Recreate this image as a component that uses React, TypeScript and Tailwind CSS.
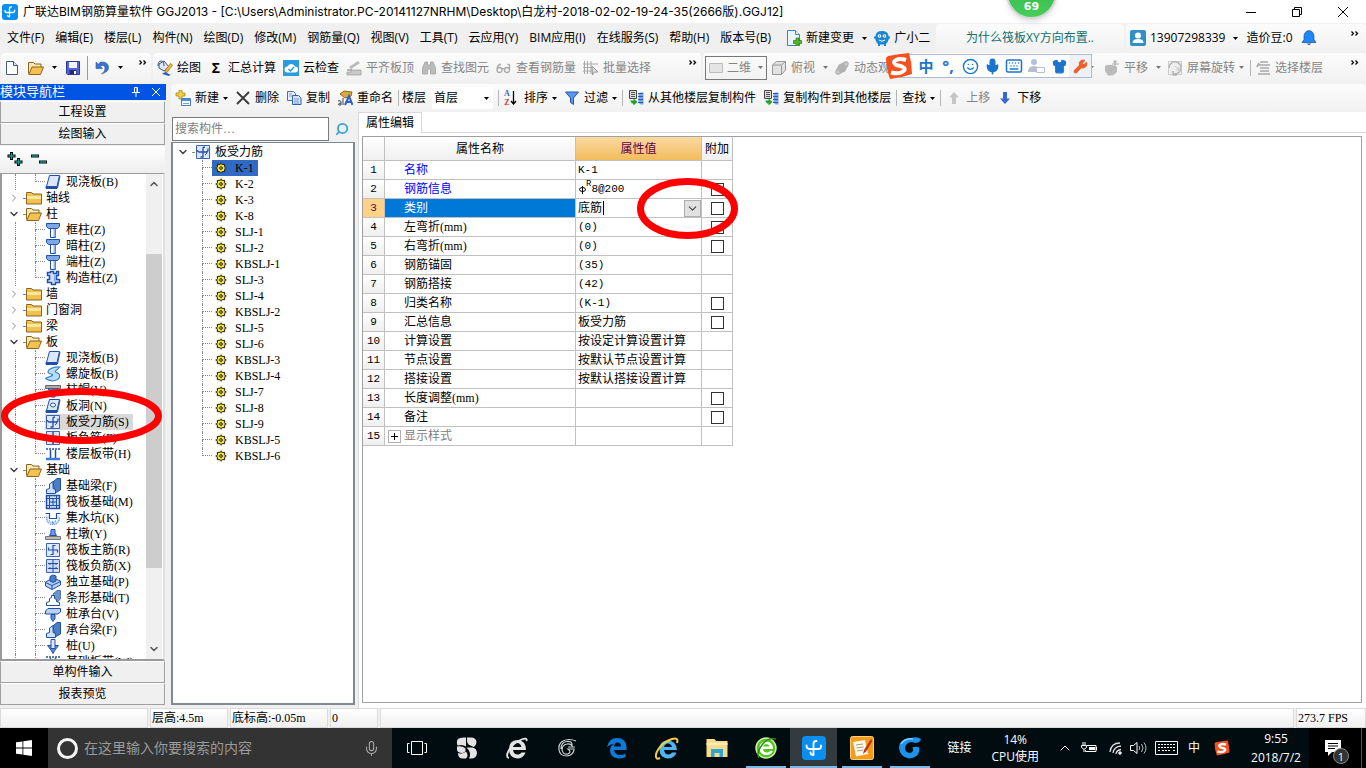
import type { ReactNode } from 'react';
import { ChevronDown, ChevronUp, ChevronRight, Mic, Search, Smile, Keyboard, Shirt, Wrench } from 'lucide-react';

const UI_FONT = "font-['Open_Sans','Noto_Sans_CJK_SC',sans-serif]";
const SONG_FONT = "font-['Liberation_Serif','Noto_Sans_CJK_SC',serif]";

const menus = [
  '文件(F)', '编辑(E)', '楼层(L)', '构件(N)', '绘图(D)', '修改(M)', '钢筋量(Q)', '视图(V)',
  '工具(T)', '云应用(Y)', 'BIM应用(I)', '在线服务(S)', '帮助(H)', '版本号(B)',
];

type NavRow = { label: string; icon: string; root?: boolean; open?: boolean; last?: boolean; active?: boolean };

const navRows: NavRow[] = [
  { label: '现浇板(B)', icon: 'slab', last: true },
  { label: '轴线', icon: 'folder', root: true },
  { label: '柱', icon: 'folderOpen', root: true, open: true },
  { label: '框柱(Z)', icon: 'column' },
  { label: '暗柱(Z)', icon: 'column' },
  { label: '端柱(Z)', icon: 'column' },
  { label: '构造柱(Z)', icon: 'tieColumn', last: true },
  { label: '墙', icon: 'folder', root: true },
  { label: '门窗洞', icon: 'folder', root: true },
  { label: '梁', icon: 'folder', root: true },
  { label: '板', icon: 'folderOpen', root: true, open: true },
  { label: '现浇板(B)', icon: 'slab' },
  { label: '螺旋板(B)', icon: 'spiral' },
  { label: '柱帽(V)', icon: 'cap' },
  { label: '板洞(N)', icon: 'hole' },
  { label: '板受力筋(S)', icon: 'rebar', active: true },
  { label: '板负筋(F)', icon: 'negRebar' },
  { label: '楼层板带(H)', icon: 'band', last: true },
  { label: '基础', icon: 'folderOpen', root: true, open: true },
  { label: '基础梁(F)', icon: 'footBeam' },
  { label: '筏板基础(M)', icon: 'raft' },
  { label: '集水坑(K)', icon: 'pit' },
  { label: '柱墩(Y)', icon: 'pier' },
  { label: '筏板主筋(R)', icon: 'mainBar' },
  { label: '筏板负筋(X)', icon: 'raftNeg' },
  { label: '独立基础(P)', icon: 'isolated' },
  { label: '条形基础(T)', icon: 'strip' },
  { label: '桩承台(V)', icon: 'pileCap' },
  { label: '承台梁(F)', icon: 'footBeam' },
  { label: '桩(U)', icon: 'pile' },
  { label: '基础板带(W)', icon: 'band' },
];

const members = [
  'K-1', 'K-2', 'K-3', 'K-8', 'SLJ-1', 'SLJ-2', 'KBSLJ-1', 'SLJ-3', 'SLJ-4', 'KBSLJ-2',
  'SLJ-5', 'SLJ-6', 'KBSLJ-3', 'KBSLJ-4', 'SLJ-7', 'SLJ-8', 'SLJ-9', 'KBSLJ-5', 'KBSLJ-6',
];

const props = [
  { name: '名称', value: 'K-1', required: true },
  { name: '钢筋信息', value: '8@200', required: true, check: true },
  { name: '类别', value: '底筋', check: true, editing: true },
  { name: '左弯折(mm)', value: '(0)', check: true },
  { name: '右弯折(mm)', value: '(0)', check: true },
  { name: '钢筋锚固', value: '(35)' },
  { name: '钢筋搭接', value: '(42)' },
  { name: '归类名称', value: '(K-1)', check: true },
  { name: '汇总信息', value: '板受力筋', check: true },
  { name: '计算设置', value: '按设定计算设置计算' },
  { name: '节点设置', value: '按默认节点设置计算' },
  { name: '搭接设置', value: '按默认搭接设置计算' },
  { name: '长度调整(mm)', value: '', check: true },
  { name: '备注', value: '', check: true },
  { name: '显示样式', value: '', group: true },
];

const BLUE = '#1f4fa8';

const glyphs: Record<string, ReactNode> = {
  folder: (
    <>
      <path d="M.5 3.500v-1h5l1.500 1.500h8.500v10h-15z" fill="#f2c14b" stroke="#8a6420" />
      <path d="M1 6h14v3H1z" fill="#fbe6a0" />
    </>
  ),
  folderOpen: (
    <>
      <path d="M.5 13.500v-11h5l1.500 1.500h6v3" fill="#fbe9b4" stroke="#8a6420" />
      <path d="M.8 14.500 4 7h11.500l-3 7.500z" fill="#f4c24e" stroke="#8a6420" />
    </>
  ),
  slab: (
    <>
      <path d="M4.500 1.500h10l-2.500 11H1.500z" fill="#dbe8fb" stroke={BLUE} />
      <path d="M1 12.500h11v2H1zM15 2l-2.500 12" fill={BLUE} stroke={BLUE} />
    </>
  ),
  hole: (
    <>
      <path d="M4.500 1.500h10l-2.500 11H1.500z" fill="#dbe8fb" stroke={BLUE} />
      <path d="M1 12.500h11v2H1zM15 2l-2.500 12" fill={BLUE} stroke={BLUE} />
      <ellipse cx="8" cy="7" rx="2.500" ry="2" fill="#fff" stroke={BLUE} />
    </>
  ),
  column: (
    <>
      <path d="M1.500 1.500h13v3l-2 2h-9l-2-2z" fill="#7ea6e6" stroke={BLUE} />
      <path d="M5.500 6.500h5v9h-5z" fill="#fff" stroke={BLUE} />
      <path d="M8.500 7h2v8h-2z" fill="#8db4ee" />
    </>
  ),
  tieColumn: (
    <>
      <path d="M5.500 1.500h3v2h3v-2h2v4h-2v4h3v3h-4v2h-4v-2h-4v-3h2v-4h-2v-3h3z" fill="#cfe0fa" stroke={BLUE} strokeWidth="1.500" />
      <path d="M9 5.500h1.500v6H9z" fill="#7ea6e6" />
    </>
  ),
  spiral: <path d="M15 1C7 .5 1.500 4 3.500 7c1 1.500 4.500.5 4 2-.5 2-4 1-7 3.500 5 4 15 2.500 14-3.500-.5-3-5-2-4-4 .5-1.500 3-2 4.500-4z" fill="#b9dcf7" stroke="#3485cf" strokeWidth="1.200" />,
  cap: (
    <>
      <path d="M.5 3.500h15v3H.5z" fill="#aaa" stroke="#666" />
      <path d="M3 7h10l-3 3v5H6v-5z" fill="#9dbcf0" stroke={BLUE} />
    </>
  ),
  rebar: (
    <>
      <path d="M1.500 1.500h13v13h-13z" fill="#dfe8fb" stroke="#3c63b8" />
      <path d="M8 13.500V4.500q0-1.500 2-1.500M5.500 13H8M2.500 6q0 2 1.500 2h7q2 0 2-2V4.500" fill="none" stroke={BLUE} strokeWidth="1.300" />
      <path d="M10 11q1.500-.5 2-3" fill="none" stroke={BLUE} />
    </>
  ),
  negRebar: (
    <>
      <path d="M1.500 1.500h13v13h-13z" fill="#dfe8fb" stroke="#3c63b8" />
      <path d="M8 2v12M2 8h12" fill="none" stroke={BLUE} strokeWidth="1.500" />
    </>
  ),
  band: (
    <>
      <path d="M1 3h14" stroke={BLUE} strokeWidth="1.500" strokeDasharray="2 1" />
      <path d="M5.500 4v8M10.500 4v8" stroke={BLUE} strokeWidth="1.500" />
      <path d="M1 13h14" stroke="#3c7be0" strokeWidth="2.500" />
    </>
  ),
  footBeam: (
    <>
      <path d="m8 4 4-3.500h3.500V12L10 15z" fill="#4a7fc4" stroke={BLUE} />
      <path d="M1.500 15.500v-4l3-1V6L8 3.500v7l2.500 1v4z" fill="#cfe0f8" stroke={BLUE} />
    </>
  ),
  raft: (
    <>
      <path d="M1.500 1.500h13v13h-13z" fill="#c9dcf8" stroke={BLUE} strokeWidth="1.500" />
      <path d="M4.500 1v14M11.500 1v14M1 4.500h14M1 11.500h14M8 4v8M5 8h6" stroke={BLUE} fill="none" />
    </>
  ),
  pit: (
    <>
      <path d="M.5 6q0 9 7.500 9t7.500-9h-3v5h-9V6z" fill="#cfe0fa" />
      <path d="M.5 3.500h4v5h7v-5h4" fill="none" stroke={BLUE} strokeWidth="1.200" />
      <path d="M1.500 7q.5 7.500 6.500 7.500T14.500 7" fill="none" stroke="#3c7be0" strokeDasharray="1 1" />
      <path d="M4 11h1m2 1h1m2-1h1m-4 2h2" stroke="#3c7be0" />
    </>
  ),
  pier: (
    <>
      <path d="M4.500 9.500 6 7V3.500h4V7l1.500 2.500z" fill="#6d9be6" stroke={BLUE} />
      <path d="M.5 10.500h15v3H.5z" fill="#bbb" stroke="#777" />
    </>
  ),
  mainBar: (
    <>
      <path d="M1.500 1.500h13v13h-13z" fill="#dfe8fb" stroke="#3c63b8" />
      <path d="M10.500 3.500H8v9H5.500M3.500 5.500V8h9v2.500" fill="none" stroke={BLUE} strokeWidth="1.200" />
    </>
  ),
  raftNeg: (
    <>
      <path d="M1.500 1.500h13v13h-13z" fill="#cfdcf8" stroke="#3c63b8" />
      <path d="M8 2v12M3 5.500h10M3 10.500h10M5 5v2m6-2v2m-6 2v2m6-2v2" fill="none" stroke={BLUE} />
    </>
  ),
  isolated: (
    <>
      <path d="M.5 8 8 4l7.500 3v4L7 15.500.5 12z" fill="#b9d1f6" stroke={BLUE} />
      <path d="M.5 8.500 7 11.500l8.500-4M7 11.500v4" fill="none" stroke={BLUE} />
      <path d="M5 2.500 8 1l3 1v5L8 8.500 5 7z" fill="#4a7fc4" stroke={BLUE} />
    </>
  ),
  strip: (
    <>
      <path d="m8 4 4-3.500h3.500V9L12 12z" fill="#6b97cf" stroke="#5577a0" />
      <path d="M1.500 15.500v-3l3-1v-3l2-1V5.500h3v3l2 1v2l3 1v3z" fill="#fff" stroke={BLUE} />
    </>
  ),
  pileCap: (
    <>
      <path d="M.5 5 3 2.500h12.500V6L13 8H.5z" fill="#b9d1f6" stroke={BLUE} />
      <path d="M6 8.500h4v4l-2 3-2-3z" fill="#5f8fdb" stroke={BLUE} />
    </>
  ),
  pile: (
    <>
      <path d="M2.500 7.500h11L10 12l-2 3.500L6 12z" fill="#5f8fdb" stroke={BLUE} />
      <path d="M6 1.500h4v9H6z" fill="#dce8fb" stroke={BLUE} />
    </>
  ),
  gear: (
    <>
      <path d="M8 1v14M1 8h14M3 3l10 10M13 3 3 13" stroke="#222" strokeWidth="3" />
      <circle cx="8" cy="8" r="5.500" fill="#222" />
      <path d="M8 2v12M2 8h12M4 4l8 8M12 4l-8 8" stroke="#ffef2e" strokeWidth="1.200" />
      <circle cx="8" cy="8" r="3.800" fill="none" stroke="#ffef2e" strokeWidth="1.400" />
      <circle cx="8" cy="8" r="2" fill="#222" />
      <circle cx="8" cy="8" r="1" fill="#ffef2e" />
    </>
  ),
  app: (
    <>
      <rect width="16" height="16" rx="3" fill="#0a8ff0" />
      <path d="M7.500 12.800V4.500q0-1.700 2-1.700M12.700 6.200v.6q0 1.700-1.700 1.700H4.800Q3 8.500 3 6.500M7.500 12.800q-2 0-2-1.500" fill="none" stroke="#fff" strokeWidth="1.300" strokeLinecap="round" />
    </>
  ),
  newFile: (
    <>
      <path d="M2.500 1.500h7l4 4v9h-11z" fill="#fff" stroke="#41597e" />
      <path d="M9.500 1.500v4h4" fill="#dce6f4" stroke="#41597e" />
    </>
  ),
  save: (
    <>
      <path d="M1.500 1.500h13v13h-12l-1-1z" fill="#5463d8" stroke="#2c3a9c" />
      <path d="M4 2h8v6H4z" fill="#f4f4fb" />
      <path d="M4.500 10h7v4h-7z" fill="#222d70" />
      <path d="M9 11h2v3H9z" fill="#fff" />
    </>
  ),
  undo: <path d="M2 2v6.500h6.500L6.200 6.200Q11 4 11 8.500q0 3-3.500 5.500 7-2 7-6.500 0-6-8-5.500L4.300 4.300z" fill="#3b74cf" stroke="#265aa8" strokeWidth=".6" />,
  draw: (
    <>
      <path d="m2 4 5-3 5 6-5 4-5-3z" fill="#dfe8f5" stroke="#3e5270" />
      <path d="M1 6q0-5 3-5t3 5" fill="none" stroke="#3e5270" />
      <path d="m15.500 5-5 7-2.500.500.500-2.500 5-6.500z" fill="#f1b43c" stroke="#986a15" strokeWidth=".7" />
      <path d="M5 14q3-3 6-.5t4-.5q-2 4-5 2.500T5 14z" fill="#2f5fc0" />
    </>
  ),
  cloud: (
    <>
      <path d="M0 0h16v16H0z" fill="#2b9be0" />
      <path d="M4.500 12.500a3 3 0 0 1 0-6 4 4 0 0 1 7.500 0 3 3 0 0 1 0 6z" fill="#fff" />
      <path d="m5.500 9 2 2 3.500-4" fill="none" stroke="#2b9be0" strokeWidth="1.500" />
    </>
  ),
  align: (
    <>
      <path d="m3 7 9-6 2 2-9 6zM1 9h5v2H1z" fill="#b9b9b9" />
      <path d="M1 15v-3h4v-2h10v5z" fill="#c8c8c8" stroke="#999" strokeWidth=".7" />
    </>
  ),
  find: (
    <path d="M4 2h2.500v3h3V2H12l2.500 6v6h-5V9h-3v5h-5V8z" fill="#bbb" stroke="#999" strokeWidth=".7" />
  ),
  glasses: (
    <path d="M1 10a2.500 2.500 0 1 0 5 0 2.500 2.500 0 1 0-5 0Q1 5 5 4M8.500 10a2.500 2.500 0 1 0 5 0 2.500 2.500 0 1 0-5 0M6 9q1-1 2.500.5M13.500 10V5l-2-1" fill="none" stroke="#a8a8a8" strokeWidth="1.300" />
  ),
  batch: (
    <>
      <path d="M1.500 1v13M4.500 1v13M8 1v13M0 4h15M0 7.500h9M0 11h9" stroke="#aaa" fill="none" />
      <path d="m9 6 6 6h-3.500l-2 3z" fill="#ddd" stroke="#999" />
    </>
  ),
  rect: <path d="M1.500 3.500h13v9h-13z" fill="#e4e4e4" stroke="#bbb" />,
  cube: (
    <>
      <path d="m1.500 5 4-3.500h9V10l-4 4.500h-9z" fill="#e2e2e2" stroke="#999" />
      <path d="M1.500 5h9v9.500M10.500 5l4-3.500" fill="none" stroke="#999" />
    </>
  ),
  orbit: (
    <>
      <ellipse cx="8" cy="8" rx="8" ry="3" transform="rotate(-45 8 8)" fill="#ccc" stroke="#aaa" />
      <circle cx="8" cy="8" r="4.500" fill="#b2b2b2" />
    </>
  ),
  pan: (
    <>
      <path d="M1 6q3-2 7-1l5 2v5l-4 3.500H4L1 11z" fill="#bbb" />
      <path d="M11 1v7M8 4h7M11 .5 9.500 2h3z" stroke="#aaa" fill="#aaa" />
    </>
  ),
  rotate: (
    <>
      <path d="M1.500 1.500h13v13h-13z" fill="#eee" stroke="#ccc" />
      <path d="M2 8a6 6 0 1 1 4 5.500M6 11v4h4" fill="none" stroke="#b5b5b5" strokeWidth="1.500" />
      <path d="m8 6 4 4M12 7v3H9" stroke="#c5c5c5" fill="none" />
    </>
  ),
  floors: <path d="M5 2h8M3 5h12M5 8h9M5 11h9M3 14h12M2 7l2-4" stroke="#a8a8a8" strokeWidth="1.700" fill="none" />,
  create: (
    <>
      <path d="M4 0h3v3h3v3H7v3H4V6H1V3h3z" fill="#f4d03c" stroke="#9c7c10" strokeWidth=".7" />
      <path d="M6.500 8.500h9v7h-9z" fill="#fff" stroke="#4a78c4" />
      <path d="M7 9h8v2H7z" fill="#4a90e0" />
      <path d="M8 13.500h6" stroke="#7aa" />
    </>
  ),
  remove: <path d="m2 2 12 12M14 2 2 14" stroke="#3a3a3a" strokeWidth="1.800" />,
  copy: (
    <>
      <path d="M1.500 1.500h6l2 2v7h-8z" fill="#e6effc" stroke="#4a6ea9" />
      <path d="M6.500 5.500h6l2.500 2.500v6.500H6.500z" fill="#d4e3fa" stroke="#3360ac" />
      <path d="M8 9h5M8 11h5M8 13h5M3 4h3M3 6h3" stroke="#5f88cc" strokeWidth=".8" />
    </>
  ),
  rename: (
    <>
      <path d="m3 4 4-3 8 1-1 4-6 2z" fill="#dba93a" stroke="#8a6a24" />
      <path d="m8 15 4-9 3.500 9M9.500 12h5" stroke="#2d5fc7" strokeWidth="2" fill="none" />
      <path d="M1 11q3-1 3 1v3H2q-2-1 2-2M6 8v7" stroke="#444" fill="none" />
    </>
  ),
  filter: <path d="M1.500 2h13L9.500 8v6.500l-3-2V8z" fill="#5b94ee" stroke="#2457b4" />,
  floorCopy: (
    <>
      <path d="M1.500.5h7v8h-7z" fill="#ddd" stroke="#444" />
      <path d="M3 2.500h4M3 4.500h4M3 6.500h4" stroke="#555" />
      <path d="M12.500 2.500h3v12h-3l-2-2v-9z" fill="#7ba6e0" />
      <path d="M10 3.500h5M10 6.500h5M10 9.500h5M10 12.500h5" stroke="#2a5cb0" strokeWidth="1.200" />
      <path d="M2 10.500h3.500V8.500L9.500 12l-4 3.500v-2H4z" fill="#22a02c" />
    </>
  ),
  up: <path d="m8 2 5 5.500h-3V14H6V7.500H3z" fill="#c5c5c5" />,
  down: <path d="m8 14 5-5.500h-3V2H6v6.500H3z" fill="#3468d4" />,
  change: (
    <>
      <path d="M1.500.5h8l4 4v11h-12z" fill="#e9f4fd" stroke="#3c84c0" />
      <path d="M9.500.5v4h4" fill="#fff" stroke="#3c84c0" />
      <path d="M10 8h3v2.500h2.500v3H13V16h-3v-2.500H7.500v-3H10z" fill="#4fb52d" stroke="#2d7d16" strokeWidth=".7" />
    </>
  ),
  mascot: (
    <>
      <path d="M8 1q6 0 6.500 5 3 1 0 3.500Q14 13 12 14v2h-2v-1.500H6V16H4v-2Q2 13 1.500 9.500-1.500 7 1.500 6 2 1 8 1z" fill="#1b86d8" />
      <circle cx="5.500" cy="6" r="1.800" fill="#fff" />
      <circle cx="10.500" cy="6" r="1.800" fill="#fff" />
      <path d="M5 10q3 2.500 6 0" stroke="#fff" fill="none" />
      <path d="M5 6h1m4 0h1" stroke="#0b4f88" />
    </>
  ),
  user: (
    <>
      <rect width="16" height="16" rx="2" fill="#2f8fc9" />
      <circle cx="8" cy="5.500" r="3" fill="#fff" />
      <path d="M2.500 13q0-4 5.500-4t5.500 4z" fill="#fff" />
    </>
  ),
  bell: (
    <>
      <path d="M8 .5q5 1 5 6v3l2 3H1l2-3v-3q0-5 5-6z" fill="#1e86f5" stroke="#1a4f9c" strokeWidth=".7" />
      <path d="M6 13.500h4q-2 3-4 0z" fill="#1a4f9c" />
    </>
  ),
};

function Glyph({ name, className = 'size-4' }: { name: string; className?: string }) {
  return (
    <svg viewBox="0 0 16 16" fill="none" aria-hidden="true" className={`shrink-0 ${className}`}>
      {glyphs[name]}
    </svg>
  );
}

function Arrow({ dim = false }: { dim?: boolean }) {
  return (
    <svg viewBox="0 0 5 3" aria-hidden="true" className="h-[3px] w-[5px] shrink-0">
      <path d="M0 0h5L2.500 3z" fill={dim ? '#777' : '#000'} />
    </svg>
  );
}

function Sep() {
  return <span className="-mx-0.5 h-4 w-px shrink-0 bg-[#b5b5b5]" />;
}

function Tool({ icon, label, dim, arrow }: { icon?: ReactNode; label: string; dim?: boolean; arrow?: boolean }) {
  return (
    <button className={`flex shrink-0 items-center gap-1 whitespace-nowrap ${dim ? 'text-[#858585]' : 'text-black'}`}>
      {typeof icon === 'string' ? <Glyph name={icon} /> : icon}
      {label}
      {arrow && <Arrow dim={dim} />}
    </button>
  );
}

function More() {
  return (
    <button aria-label="更多" className="self-start pt-[6px]">
      <svg viewBox="0 0 8 5" className="h-[5px] w-2" fill="none" stroke="#000" strokeWidth="1.300">
        <path d="m.5.5 2 2-2 2M4.500.5l2 2-2 2" />
      </svg>
    </button>
  );
}

const BAND = 'flex items-center rounded-sm bg-linear-to-b from-[#fcfcfc] to-[#f1f1f1]';

function TitleBar() {
  return (
    <header className="flex h-[23px] shrink-0 items-center bg-white pl-0.5 text-black">
      <Glyph name="app" />
      <h1 className="ml-[5px] flex-1 font-['Inter','Noto_Sans_CJK_SC',sans-serif] whitespace-nowrap">
        广联达BIM钢筋算量软件 GGJ2013 - [C:\Users\Administrator.PC-20141127NRHM\Desktop\白龙村-2018-02-02-19-24-35(2666版).GGJ12]
      </h1>
      <button aria-label="最小化" className="flex w-[46px] justify-center">
        <svg viewBox="0 0 10 10" className="size-[10px]" stroke="#000"><path d="M0 5.500h10" /></svg>
      </button>
      <button aria-label="还原" className="flex w-[46px] justify-center">
        <svg viewBox="0 0 10 10" className="size-[10px]" stroke="#000" fill="none"><path d="M.5 2.500h7v7h-7zM2.500 2.500v-2h7v7h-2" /></svg>
      </button>
      <button aria-label="关闭" className="flex w-[46px] justify-center">
        <svg viewBox="0 0 10 10" className="size-[10px]" stroke="#000"><path d="m0 0 10 10M10 0 0 10" /></svg>
      </button>
    </header>
  );
}

function MenuBar() {
  return (
    <nav className="flex h-[30px] shrink-0 items-stretch">
      <div className="flex w-[936px] shrink-0 items-center gap-[11px] pl-[7px]">
        {menus.map((m) => (
          <button key={m} className="shrink-0 whitespace-nowrap">{m}</button>
        ))}
        <button className="ml-1 flex shrink-0 items-center gap-1">
          <Glyph name="change" />
          新建变更
          <span className="pl-1"><Arrow /></span>
        </button>
        <button className="-ml-1 flex shrink-0 items-center gap-1">
          <Glyph name="mascot" />
          广小二
        </button>
      </div>
      <div className={`${BAND} my-px w-[188px] shrink-0 pl-[30px]`}>
        <a href="#" className="whitespace-nowrap text-[#10706c]">为什么筏板XY方向布置..</a>
      </div>
      <div className={`${BAND} my-px ml-0.5 flex-1 gap-1 pl-1`}>
        <Glyph name="user" />
        <button className="flex items-center gap-2">13907298339 <Arrow /></button>
        <span className="ml-1 whitespace-nowrap">造价豆:0</span>
        <button aria-label="消息" className="ml-1"><Glyph name="bell" /></button>
        <span className="flex-1" />
        <span className="mr-[7px] self-stretch"><More /></span>
      </div>
    </nav>
  );
}

function MainToolbar() {
  return (
    <div className="flex h-[30px] shrink-0 gap-0.5 pb-px pl-px">
      <div className={`${BAND} w-[150px] shrink-0 pl-[3px]`}>
        <button aria-label="新建文件"><Glyph name="newFile" /></button>
        <button aria-label="打开" className="ml-2 flex items-center gap-2"><Glyph name="folderOpen" /><Arrow /></button>
        <button aria-label="保存" className="mr-[6px] ml-2"><Glyph name="save" /></button>
        <span className="h-6 w-px bg-[#9a9a9a]" />
        <button aria-label="撤销" className="ml-[6px] flex items-center gap-2"><Glyph name="undo" /><Arrow /></button>
        <span className="flex-1" />
        <span className="mr-1 self-stretch"><More /></span>
      </div>
      <div className={`${BAND} w-[548px] shrink-0 gap-[7px] pl-1`}>
        <Tool icon="draw" label="绘图" />
        <Tool icon={<span className="w-4 text-center text-sm font-bold">Σ</span>} label="汇总计算" />
        <Tool icon="cloud" label="云检查" />
        <Tool icon="align" label="平齐板顶" dim />
        <Tool icon="find" label="查找图元" dim />
        <Tool icon="glasses" label="查看钢筋量" dim />
        <Tool icon="batch" label="批量选择" dim />
        <span className="flex-1" />
        <span className="mr-1 self-stretch"><More /></span>
      </div>
      <div className={`${BAND} flex-1 pl-0.5`}>
        <button className="flex h-6 w-[62px] shrink-0 items-center gap-[3px] border border-[#777] pl-0.5 text-[#858585]">
          <Glyph name="rect" />二维<span className="pl-1"><Arrow dim /></span>
        </button>
        <button className="ml-1 flex shrink-0 items-center gap-1 text-[#858585]">
          <Glyph name="cube" />俯视<span className="pl-1"><Arrow dim /></span>
        </button>
        <span className="ml-[6px] flex w-[260px] shrink-0 items-center justify-between">
          <Tool icon="orbit" label="动态观察" dim />
          <Arrow dim />
        </span>
        <button className="ml-[10px] flex shrink-0 items-center gap-1 text-[#858585]">
          <Glyph name="pan" />平移<span className="pl-1"><Arrow dim /></span>
        </button>
        <span className="mr-2 ml-[6px] flex"><Tool icon="rotate" label="屏幕旋转" dim arrow /></span>
        <Sep />
        <span className="ml-[6px] flex"><Tool icon="floors" label="选择楼层" dim /></span>
        <span className="flex-1" />
        <span className="mr-[7px] self-stretch"><More /></span>
      </div>
    </div>
  );
}

function MemberToolbar() {
  return (
    <div className={`${BAND} h-[28px] shrink-0 gap-[7px] pl-1`}>
      <Tool icon="create" label="新建" arrow />
      <Tool icon="remove" label="删除" />
      <Tool icon="copy" label="复制" />
      <Tool icon="rename" label="重命名" />
      <Sep />
      <label htmlFor="floor" className="-ml-0.5 shrink-0">楼层</label>
      <span className="-ml-px flex h-[22px] w-[61px] shrink-0 items-center bg-white pr-1">
        <select id="floor" className="w-full appearance-none bg-transparent pl-0.5 outline-none">
          <option>首层</option>
        </select>
        <Arrow />
      </span>
      <Sep />
      <Tool
        icon={
          <span className="flex w-4 items-center">
            <span className="flex flex-col font-['Liberation_Serif',serif] text-[8px] leading-[9px] font-bold">
              <span className="text-[#3566b5]">A</span>
              <span className="text-[#b04040]">Z</span>
            </span>
            <svg viewBox="0 0 7 14" className="h-[14px] w-[7px]" stroke="#000" fill="none"><path d="M3.500 0v12M1 10l2.500 3L6 10" strokeWidth="1.300" /></svg>
          </span>
        }
        label="排序"
        arrow
      />
      <Tool icon="filter" label="过滤" arrow />
      <Sep />
      <Tool icon="floorCopy" label="从其他楼层复制构件" />
      <Tool icon="floorCopy" label="复制构件到其他楼层" />
      <Sep />
      <Tool label="查找" arrow />
      <Sep />
      <Tool icon="up" label="上移" dim />
      <Tool icon="down" label="下移" />
    </div>
  );
}

function Branch({ last }: { last?: boolean }) {
  return (
    <span className="flex w-[10px] shrink-0 flex-col">
      <span className="h-2 border-b border-l border-dotted border-[#888]" />
      <span className={last ? 'h-2' : 'h-2 border-l border-dotted border-[#888]'} />
    </span>
  );
}

function ModuleTree() {
  return (
    <div className="flex min-h-0 flex-1 overflow-hidden border-x-2 border-t border-b-2 border-[#9a9a9a] border-r-[#e0e0e0] bg-white pr-px">
      <ul className={`min-w-0 flex-1 overflow-hidden ${SONG_FONT}`}>
        {navRows.map((r, i) => (
          <li key={i} className="flex h-4 items-center whitespace-nowrap">
            {r.root ? (
              <>
                <span className="flex w-[21px] shrink-0 justify-center pl-0.5">
                  {r.open ? <ChevronDown size={12} strokeWidth={3} color="#444" /> : <ChevronRight size={12} strokeWidth={2} color="#888" />}
                </span>
                <span className="mr-px w-[2px] shrink-0 border-t border-dotted border-[#888]" />
                <Glyph name={r.icon} />
                <span className="ml-1">{r.label}</span>
              </>
            ) : (
              <>
                <span className="ml-[13px] h-4 w-5 shrink-0 border-l border-dotted border-[#888]" />
                <Branch last={r.last} />
                <span className={`flex h-4 items-center gap-[5px] ${r.active ? 'bg-[#d9d9d9] pr-1' : ''}`}>
                  <Glyph name={r.icon} />
                  {r.label}
                </span>
              </>
            )}
          </li>
        ))}
      </ul>
      <div className="flex w-4 shrink-0 flex-col items-center bg-[#f0f0f0] py-1">
        <ChevronUp size={12} strokeWidth={3} color="#555" />
        <span className="mt-16 h-[314px] w-full bg-[#cdcdcd]" />
        <span className="flex-1" />
        <ChevronDown size={12} strokeWidth={3} color="#555" />
      </div>
    </div>
  );
}

const NAV_BTN = 'h-[22px] w-full shrink-0 border border-[#a0a0a0] border-t-white bg-[#f0f0f0] text-center';

function Sidebar() {
  return (
    <aside className={`flex w-[166px] shrink-0 flex-col pb-[3px] ${SONG_FONT}`}>
      <div className="flex h-4 shrink-0 items-center bg-[#0054e3] text-[13px] leading-4 text-white">
        <h2 className="flex-1">模块导航栏</h2>
        <button aria-label="固定" className="mr-3">
          <svg viewBox="0 0 8 10" className="h-[10px] w-2" fill="none" stroke="#fff"><path d="M2.500 5.500v-5h3v5M0 5.500h8M4 6v4M5 1v4" /></svg>
        </button>
        <button aria-label="关闭面板" className="mr-[6px]">
          <svg viewBox="0 0 8 8" className="size-2" stroke="#fff"><path d="m0 0 8 8M8 0 0 8" /></svg>
        </button>
      </div>
      <div className="mt-px flex min-h-0 flex-1 flex-col pr-px">
        <button className={NAV_BTN}>工程设置</button>
        <button className={NAV_BTN}>绘图输入</button>
        <div className="my-px flex h-[26px] shrink-0 items-center gap-2 bg-linear-to-b from-white to-[#eee] pl-[7px]">
          <button aria-label="全部展开">
            <svg viewBox="0 0 16 16" className="size-4">
              <path d="M4.500 1v8M.5 5h8M11.500 7v8M7.500 11h8" stroke="#000" strokeWidth="3" />
              <path d="M4.500 2v6M1.500 5h6M11.500 8v6M8.500 11h6" stroke="#0a9d94" strokeWidth="1.400" />
            </svg>
          </button>
          <button aria-label="全部折叠">
            <svg viewBox="0 0 16 16" className="size-4">
              <path d="M0 5h8M8 11h8" stroke="#000" strokeWidth="3" />
              <path d="M1 5h6M9 11h6" stroke="#0a9d94" strokeWidth="1.400" />
            </svg>
          </button>
        </div>
        <ModuleTree />
        <button className={NAV_BTN}>单构件输入</button>
        <button className={NAV_BTN}>报表预览</button>
      </div>
    </aside>
  );
}

function MemberPanel() {
  return (
    <section className={`flex w-[184px] shrink-0 flex-col pt-1 pb-[3px] ${SONG_FONT}`}>
      <div className="flex h-[26px] shrink-0 items-center pl-px">
        <input
          aria-label="搜索构件"
          placeholder="搜索构件…"
          className="h-6 w-[157px] border border-[#7a7a7a] bg-white px-0.5 outline-none placeholder:text-[#808080]"
        />
        <button aria-label="搜索" className="flex flex-1 justify-center">
          <Search size={14} strokeWidth={3} color="#3aa0dc" className="-scale-x-100" />
        </button>
      </div>
      <ul className="flex-1 overflow-hidden border-2 border-t border-[#828790] bg-white pt-px">
        <li className="flex h-4 items-center">
          <span className="flex w-[19px] shrink-0 justify-center"><ChevronDown size={12} strokeWidth={3} color="#444" /></span>
          <span className="mr-px w-[2px] border-t border-dotted border-[#888]" />
          <Glyph name="rebar" />
          <span className="ml-1">板受力筋</span>
        </li>
        {members.map((m, i) => (
          <li key={m} className="flex h-4 items-center">
            <span className="w-[29px] shrink-0" />
            <Branch last={i === members.length - 1} />
            <span className={`flex h-4 items-center gap-2 pr-1 pl-[3px] ${i === 0 ? 'bg-[#316ac5]' : ''}`}>
              <Glyph name="gear" className="size-3" />
              {m}
            </span>
          </li>
        ))}
      </ul>
    </section>
  );
}

const CELL = 'border-r border-b border-[#c0c0c0] p-0';

function ValueCell({ row, value, editing }: { row: number; value: string; editing?: boolean }) {
  if (editing) {
    return (
      <div className="flex h-[18px] items-center pl-0.5">
        <input aria-label="类别" defaultValue={value} className="h-[14px] w-[26px] border-r border-black outline-none" />
        <span className="flex-1" />
        <button aria-label="选择类别" className="flex size-[17px] items-center justify-center border border-[#adadad] bg-[#e1e1e1]">
          <ChevronDown size={13} color="#444" />
        </button>
      </div>
    );
  }
  if (row === 2) {
    return (
      <span className="flex items-center pl-[3px] font-['Liberation_Mono',monospace] text-[11px]">
        <svg viewBox="0 0 7 10" className="h-[10px] w-[7px]" stroke="#000" fill="none">
          <ellipse cx="3.500" cy="5.500" rx="3" ry="2" />
          <path d="M3.500 2v8" />
        </svg>
        <sup className="text-[9px] leading-none">R</sup>
        {value}
      </span>
    );
  }
  const latin = /^[\x20-\x7e]+$/.test(value);
  return <span className={latin ? "block pl-0.5 font-['Liberation_Mono',monospace] text-[11px]" : 'block pl-0.5'}>{value}</span>;
}

function PropertyGrid() {
  return (
    <table className={`w-[370px] table-fixed border-separate border-spacing-0 leading-[18px] ${SONG_FONT}`}>
      <colgroup>
        <col className="w-[22px]" />
        <col className="w-[191px]" />
        <col className="w-[126px]" />
        <col className="w-[31px]" />
      </colgroup>
      <thead>
        <tr className="h-6 bg-linear-to-b from-white to-[#efefef]">
          <th className={CELL} aria-label="序号" />
          <th className={`${CELL} font-normal`}>属性名称</th>
          <th className={`${CELL} bg-linear-to-b from-[#fad9a0] to-[#f1bc5a] font-normal text-[#600050]`}>属性值</th>
          <th className={`${CELL} font-normal`}>附加</th>
        </tr>
      </thead>
      <tbody>
        {props.map((p, i) => (
          <tr key={p.name} className="h-[19px]">
            <td className={`${CELL} text-center font-['Liberation_Mono',monospace] text-[11px] ${p.editing ? 'bg-[#ffd387] text-[#600050]' : 'bg-linear-to-b from-white to-[#efefef]'}`}>
              {i + 1}
            </td>
            <td
              className={`${CELL} ${p.editing ? 'bg-[#0078d7] text-white' : ''} ${p.required ? 'text-[#0000ff]' : ''} ${p.group ? 'text-[#808080]' : ''}`}
            >
              <span className="flex items-center">
                <span className="flex w-[19px] shrink-0 justify-center">
                  {p.group && (
                    <button aria-label="展开" className="flex size-[13px] items-center justify-center border border-[#b0b0b0] bg-white">
                      <svg viewBox="0 0 7 7" className="size-[7px]" stroke="#000"><path d="M3.500 0v7M0 3.500h7" /></svg>
                    </button>
                  )}
                </span>
                {p.name}
              </span>
            </td>
            <td className={CELL}><ValueCell row={i + 1} value={p.value} editing={p.editing} /></td>
            <td className={CELL}>
              {p.check && (
                <input type="checkbox" aria-label={`${p.name}附加`} className="mx-auto block size-[13px] appearance-none border border-[#333] bg-white" />
              )}
            </td>
          </tr>
        ))}
      </tbody>
    </table>
  );
}

function PropertyPanel() {
  return (
    <section className="flex min-w-0 flex-1 flex-col border-l border-[#d9d9d9] bg-white pb-[3px]">
      <div className={`flex h-[21px] shrink-0 ${SONG_FONT}`}>
        <button className="w-[63px] border-t border-r border-[#d9d9d9] text-center">属性编辑</button>
        <span className="flex-1 border-b border-[#d9d9d9]" />
      </div>
      <div className="mt-[3px] mr-1 mb-0.5 ml-[3px] min-h-0 flex-1 overflow-hidden border border-[#a0a0a0]">
        <PropertyGrid />
      </div>
    </section>
  );
}

function StatusBar() {
  const cell = 'border border-[#dadada] bg-linear-to-b from-white to-[#f0f0f0] px-px whitespace-nowrap';
  return (
    <footer className={`flex h-5 shrink-0 gap-0.5 leading-[18px] ${SONG_FONT}`}>
      <span className={`${cell} w-[148px]`} />
      <span className={`${cell} w-[78px]`}>层高:4.5m</span>
      <span className={`${cell} w-[98px]`}>底标高:-0.05m</span>
      <span className={`${cell} w-[48px]`}>0</span>
      <span className={`${cell} flex-1`} />
      <span className={`${cell} w-[70px]`}>273.7 FPS</span>
    </footer>
  );
}

const taskIcons: { label: string; art: ReactNode; state?: 'open' | 'active' }[] = [
  {
    label: '任务视图',
    art: <path d="M6.500 5.500h11v13h-11zM4.500 7.500h-2v9h2M19.500 7.500h2v9h-2" stroke="#fff" fill="none" />,
  },
  {
    label: '风扇',
    art: (
      <path
        d="M11 1.500v9q-3-2.500-8.500-1Q1 5 3 3t8-1.500zM12 1.500h4q5 0 5.500 4.500-.5 4-3 5-1-1-3-1.500Q11.500 9 12 1.500zM11.500 11.500h6q4.500 1 4.500 6-1 5-5.500 5H14q3-6-2.500-11zM2 10.500q5-1 8.500 2 .5 4-3 4.500-5 0-5.500-3zM3 17q5 1.500 8-1.500 3 4 0 7H7q-4-.5-4-5.500z"
        fill="#e4e4e4"
      />
    ),
  },
  {
    label: '浏览器',
    art: (
      <>
        <path d="M21 14H8q1 5 5.500 4.500 2-.5 3-2h4q-2 6-8.500 6-8-1-8-9.500T12.500 4Q21 4.500 21 14zM8 11h8.500q-1-4-4.500-4t-4 4z" fill="#e4e4e4" fillRule="evenodd" />
        <path d="M21.500 5q1-4-5-1.500Q8 7 4 14t0 8" stroke="#e4e4e4" strokeWidth="1.800" fill="none" />
      </>
    ),
  },
  {
    label: '螺旋',
    art: <path d="M21 5q-7-3-13 0-5 3-4 9t8 6q7-1 7-7h-6q4 3 0 5-5 1-6-4 0-5 5-6 4-.5 5 2 1-5-5-4.500Q6 6 6 13M13 11h7" stroke="#d0d0d0" strokeWidth="1.200" fill="none" />,
  },
  {
    label: 'Edge',
    art: <path d="M2 11Q4 2 12 2q9 0 9.500 9v3H9q1 5 6 5 3 0 5.500-1.500V21q-3 1.500-7 1.500-8-.5-8.500-8Q5 10 9 8 5 8 2 11zm7-.5h7q0-4-3.500-4-3 0-3.500 4z" fill="#0b7ad8" fillRule="evenodd" />,
  },
  {
    label: 'Internet Explorer',
    art: (
      <>
        <path d="M22 14H9q1 5 5 4.500 2-.5 3-2h4.500q-2 6-9 6-8-1-8-9.500T13 4.500q8.500.5 9 9.500zM9 11h8q-1-3.500-4-3.500T9 11z" fill="#4fb4f0" fillRule="evenodd" />
        <path d="M22 7q2-6-5-4Q8 6 3.500 13T2 22.500q1 .5 3-.5" stroke="#f6cf3c" strokeWidth="2" fill="none" />
      </>
    ),
  },
  {
    label: '文件资源管理器',
    art: (
      <>
        <path d="M1.500 3h8l1.500 2h11.500v16h-21z" fill="#f7dd8a" />
        <path d="M1.500 7h21v2h-21z" fill="#fdedb8" />
        <path d="M6 21v-8h12v8h-3.500v-4h-5v4z" fill="#2fa3dc" />
      </>
    ),
  },
  {
    label: '安全浏览器',
    state: 'open',
    art: (
      <>
        <circle cx="12" cy="12" r="10" fill="#52c41e" />
        <circle cx="12" cy="12" r="10" fill="none" stroke="#c5f0a8" strokeWidth="1.500" />
        <path d="M19 13H9q.5 3.500 4 3.500 2 0 3-1.500h3q-2 4-6.500 4Q5.500 18.500 5.500 12T12 5.500q7 0 7 7.500zM9 10.500h6.500q-.5-2.500-3.200-2.500T9 10.500z" fill="#fff" fillRule="evenodd" />
        <path d="M22 3q-8-2-14 6T5 22" stroke="#2b8a0f" strokeWidth="1.400" fill="none" />
      </>
    ),
  },
  {
    label: '广联达',
    state: 'active',
    art: (
      <>
        <rect width="24" height="24" rx="4" fill="#0a8ff0" />
        <path d="M11.500 19V7.500q0-2.500 3-2.500M19 9.500v1q0 2.500-2.500 2.500H7.500Q4.500 13 4.500 9.500M11.500 19q-3 0-3-2.500" fill="none" stroke="#fff" strokeWidth="1.800" strokeLinecap="round" />
      </>
    ),
  },
  {
    label: '便笺',
    state: 'open',
    art: (
      <>
        <rect x=".5" y=".5" width="23" height="23" rx="2" fill="#f59a1c" stroke="#ffd27a" />
        <path d="m3 6 12-2 3 14-12 2.500z" fill="#fffbe8" />
        <path d="m6 9 7-1M6.500 12l7-1M7 15l6-1" stroke="#a98" />
        <path d="m21 3-7 11-1 4 3-2.500L22.500 5z" fill="#b8341f" />
      </>
    ),
  },
  {
    label: '高速浏览器',
    state: 'open',
    art: (
      <>
        <path d="M23 3q-4-3-10-1Q1 3 1 12q1 9 10 10.500 9-.5 10.500-8 0-3-1-3.500h-6q2 5-2.500 6-5-.5-5-5 .5-4 4-5.500 3-1 6 .5 5 0 6-4z" fill="#1d93ee" />
        <path d="M3 8q4-6 12-5" stroke="#7fd0ff" strokeWidth="1.500" fill="none" />
      </>
    ),
  },
];

function Taskbar() {
  return (
    <footer className="flex h-10 shrink-0 items-stretch bg-[#000c10] text-white">
      <button aria-label="开始" className="flex w-12 shrink-0 items-center justify-center bg-black">
        <svg viewBox="0 0 16 16" className="size-4" fill="#fff">
          <path d="m0 2.300 6.500-.9v6.200H0zM7.300 1.300 16 0v7.600H7.300zM0 8.400h6.500v6.200L0 13.700zM7.300 8.400H16V16l-8.700-1.300z" />
        </svg>
      </button>
      <div className="flex w-[344px] shrink-0 items-center gap-[6px] bg-[#333] pr-[12px] pl-[9px]">
        <span className="size-[21px] rounded-full border-[3px] border-[#f4f4f4]" />
        <input
          aria-label="搜索内容"
          placeholder="在这里输入你要搜索的内容"
          className="min-w-0 flex-1 bg-transparent text-sm outline-none placeholder:text-[#9a9a9a]"
        />
        <Mic size={17} strokeWidth={1.5} color="#aaa" />
      </div>
      <div className="flex shrink-0">
        {taskIcons.map((t) => (
          <button
            key={t.label}
            aria-label={t.label}
            className={`flex flex-col items-center justify-end ${t.state ? 'mr-px w-[47px]' : 'w-[50px]'} ${t.state === 'active' ? 'bg-[#343b3f]' : ''}`}
          >
            <svg viewBox="0 0 24 24" className="mb-[6px] size-6">{t.art}</svg>
            <span className={`h-0.5 ${t.state ? 'bg-[#76b9ed]' : ''} ${t.state === 'active' ? 'w-full' : 'w-10'}`} />
          </button>
        ))}
      </div>
      <div className="flex min-w-0 flex-1 items-center justify-end">
        <span>链接</span>
        <span className="ml-5 text-center leading-[17px]">14%<br />CPU使用</span>
        <ChevronUp size={16} strokeWidth={1.5} className="ml-[18px]" />
        <svg viewBox="0 0 17 12" className="ml-2 h-3 w-[17px]" fill="none" stroke="#fff">
          <path d="M6 3.500h9v6H4.500V8M15.500 5v3M2 0v3M4 0v3M.5 3.500h5v2l-2 1.500h-1L.5 5.500zM3 7v3" />
          <path d="M8 5h6v3H8z" fill="#fff" stroke="none" />
        </svg>
        <svg viewBox="0 0 14 14" className="ml-[11px] size-[14px]" fill="none" stroke="#ddd">
          <path d="M1 11Q2 2 11 2M4 12q1-6.500 8-7M7 13q.5-4 5-4.500" strokeWidth="1.300" />
          <circle cx="11" cy="12" r="1.300" fill="#fff" />
        </svg>
        <svg viewBox="0 0 17 14" className="ml-[7px] h-[14px] w-[17px]" fill="none" stroke="#fff">
          <path d="M.5 4.500h3l3.500-3v11l-3.500-3h-3z" />
          <path d="M9 5q1.500 2 0 4M11.500 3q3 4 0 8M14 1.500q4 5.500 0 11" stroke="#bbb" />
        </svg>
        <svg viewBox="0 0 23 14" className="ml-2 h-[14px] w-[23px]" fill="none" stroke="#fff">
          <path d="M.5.5h22v13H.5z" />
          <path d="M3 3.500h17M3 6.500h17M3 9.500h2m2 0h9m2 0h2" strokeDasharray="2 1" />
        </svg>
        <span className="ml-[10px]">中</span>
        <SogouMark className="ml-[14px] size-4" />
        <span className="ml-4 w-[60px] text-center leading-[19px]">9:55<br />2018/7/2</span>
        <button aria-label="通知" className="relative ml-[3px] flex h-full w-[52px] shrink-0 items-center justify-center bg-black pr-1">
          <svg viewBox="0 0 16 16" className="size-4"><path d="M0 0h16v12H7l-4 4v-4H0z" fill="#fff" /><path d="M3 3.500h10M3 6h10M3 8.500h7" stroke="#000" /></svg>
          <span className="absolute right-3 bottom-1 flex size-4 items-center justify-center rounded-full border border-[#888] bg-[#333] text-[11px] leading-none">1</span>
        </button>
        <span className="h-full w-px bg-[#555]" />
        <span className="h-full w-1 bg-black" />
      </div>
    </footer>
  );
}

function SogouMark({ className }: { className: string }) {
  return (
    <svg viewBox="0 0 28 28" className={`shrink-0 ${className}`} aria-hidden="true">
      <path d="M3 4Q14 2 24 1q3 10 3 21-11 4-22 5Q1 16 1 6z" fill="#f4511e" />
      <path d="M21 8q-6-2-10 0t0 5l6 1.500q5 2 1 5t-12 1" fill="none" stroke="#fff" strokeWidth="4" />
    </svg>
  );
}

function InputMethodBar() {
  return (
    <div className="absolute top-[52px] left-[885px] flex items-center">
      <SogouMark className="relative z-10 size-7" />
      <div className="-ml-[14px] flex h-6 items-center border border-[#a8bdd4] bg-white pl-[15px] text-[#1c75cc]">
        <span className="w-[22px] text-center text-[15px] font-bold">中</span>
        <span className="w-[22px] text-center text-base font-bold">°,</span>
        <span className="flex w-[22px] justify-center"><Smile size={17} /></span>
        <span className="flex w-[22px] justify-center"><Mic size={17} strokeWidth={2.5} fill="#1c75cc" /></span>
        <span className="flex w-[22px] justify-center"><Keyboard size={18} /></span>
        <span className="flex w-[24px] justify-center">
          <svg viewBox="0 0 18 16" className="h-4 w-[18px]" fill="#b4bfd6"><circle cx="6" cy="4" r="3" /><path d="M0 14q0-6 6-6t6 6z" /><path d="M8.500 9.500h8v5h-8z" fill="#fff" stroke="#b4bfd6" /></svg>
        </span>
        <span className="flex w-[20px] justify-center"><Shirt size={15} fill="#1c75cc" /></span>
        <span className="flex h-full w-[22px] items-center justify-center bg-[#eef2f8] text-[#f2602c]"><Wrench size={15} fill="#f2602c" /></span>
      </div>
    </div>
  );
}

export default function App() {
  return (
    <div className={`relative flex h-screen flex-col overflow-hidden bg-[#f0f0f0] text-xs leading-4 text-black ${UI_FONT}`}>
      <TitleBar />
      <MenuBar />
      <MainToolbar />
      <main className="flex min-h-0 flex-1 gap-[5px] pt-px">
        <Sidebar />
        <div className="flex min-w-0 flex-1 flex-col">
          <MemberToolbar />
          <div className="flex min-h-0 flex-1 gap-[3px]">
            <MemberPanel />
            <PropertyPanel />
          </div>
        </div>
      </main>
      <StatusBar />
      <Taskbar />

      <InputMethodBar />

      {/* network speed ball */}
      <div className="absolute -top-8 left-[1006px] flex size-[51px] items-end justify-center rounded-full border-2 border-[#d5d5d5] bg-linear-to-b from-[#2faa4a] to-[#45cf5a] pb-1 font-['DejaVu_Sans',sans-serif] text-[11px] leading-3 font-bold text-white shadow-md">
        69
      </div>

      {/* red pen marks */}
      <svg className="pointer-events-none absolute top-[388px] left-px h-14 w-[161px]" viewBox="0 0 161 56" fill="none" aria-hidden="true">
        <ellipse cx="80.500" cy="28" rx="77" ry="24.500" stroke="#f00" strokeWidth="7" />
      </svg>
      <svg className="pointer-events-none absolute top-[178px] left-[637px] h-[61px] w-[101px]" viewBox="0 0 101 61" fill="none" aria-hidden="true">
        <ellipse cx="50.500" cy="30.500" rx="47" ry="27" stroke="#f00" strokeWidth="7" />
      </svg>
    </div>
  );
}
